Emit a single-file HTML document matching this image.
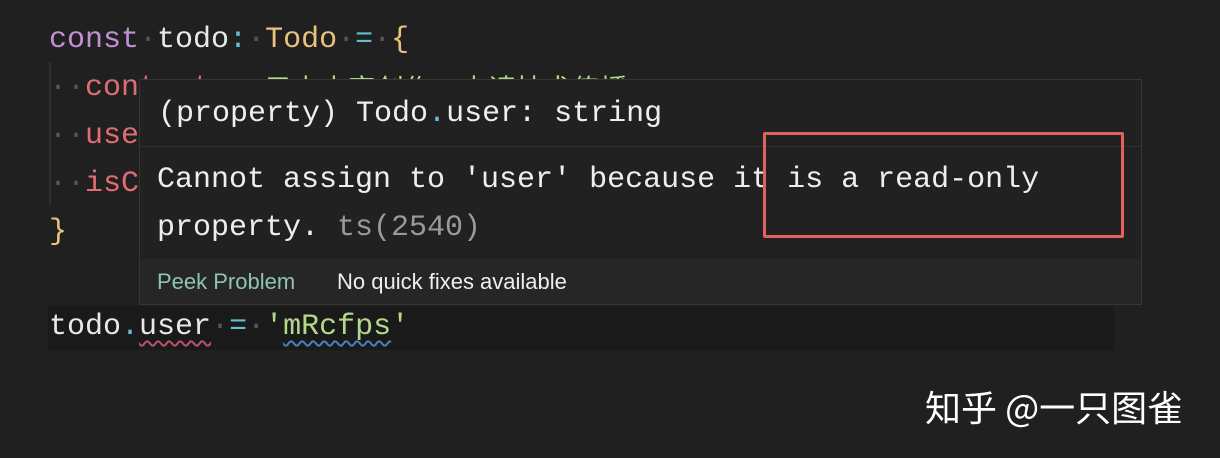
<!DOCTYPE html>
<html><head><meta charset="utf-8"><style>
body{margin:0;width:1220px;height:458px;background:#202020;overflow:hidden;position:relative;font-family:"Liberation Mono",monospace;}
.l{position:absolute;left:49px;font-size:30px;line-height:48px;white-space:pre;color:#e8e8e8;}
.k{color:#c18fd6}.t{color:#e9c27e}.o{color:#5fc0d0}.p{color:#e06c75}.s{color:#b4d88a}.d{color:#555}
.tip{position:absolute;left:139px;top:79px;width:1001px;height:224px;background:#212121;border:1px solid #363636;}
.hd{position:absolute;left:18px;top:12px;font-size:30px;line-height:44px;color:#eee;white-space:pre}
.sep{position:absolute;left:0;right:0;top:66px;height:1px;background:#303030}
.msg{position:absolute;left:17px;top:76px;font-size:30px;line-height:48px;color:#eee;white-space:pre}
.ft{position:absolute;left:0;right:0;top:179px;bottom:0;background:#262626;font-family:"Liberation Sans",sans-serif;font-size:22px;color:#eee}
.red{position:absolute;left:763px;top:132px;width:355px;height:100px;border:3px solid #e0625a;border-radius:2px}
</style></head><body>
<div style="position:absolute;left:48px;top:306px;width:1066px;height:44px;background:#1a1a1a"></div>
<div style="position:absolute;left:49px;top:62px;width:2px;height:143px;background:#2e2e2e"></div>
<div class="l" style="top:16px"><span class="k">const</span><span class="d">·</span>todo<span class="o">:</span><span class="d">·</span><span class="t">Todo</span><span class="d">·</span><span class="o">=</span><span class="d">·</span><span class="t">{</span></div>
<div class="l" style="top:64px"><span class="d">··</span><span class="p">content</span><span class="o">:</span><span class="d">·</span><span class="s" style="font-family:'Liberation Mono','Noto Sans CJK SC',monospace;position:relative;top:4px;font-size:28px">'子由内容创作，内请技术传播'</span></div>
<div class="l" style="top:112px"><span class="d">··</span><span class="p">user</span></div>
<div class="l" style="top:160px"><span class="d">··</span><span class="p">isC</span></div>
<div class="l" style="top:208px"><span class="t">}</span></div>
<div class="l" style="top:303px">todo<span class="o">.</span><span style="text-decoration:underline wavy #c0506a;text-underline-offset:6px;text-decoration-thickness:1.5px">user</span><span class="d">·</span><span class="o">=</span><span class="d">·</span><span class="s">'<span style="text-decoration:underline wavy #4a7fc0;text-underline-offset:6px;text-decoration-thickness:1.5px">mRcfps</span>'</span></div>
<div class="tip">
<div class="hd">(property) Todo<span class="o">.</span>user: string</div>
<div class="sep"></div>
<div class="msg">Cannot assign to 'user' because it is a read-only
property. <span style="color:#9a9a9a">ts(2540)</span></div>
<div class="ft"><span style="position:absolute;left:17px;top:10px;color:#8ec3b5">Peek Problem</span><span style="position:absolute;left:197px;top:10px">No quick fixes available</span></div>
</div>
<div class="red"></div>
<div style="position:absolute;left:925px;top:383px;font-family:'Noto Sans CJK SC',sans-serif;font-size:36px;line-height:46px;color:#fff;white-space:pre">知乎 @一只图雀</div>
</body></html>
